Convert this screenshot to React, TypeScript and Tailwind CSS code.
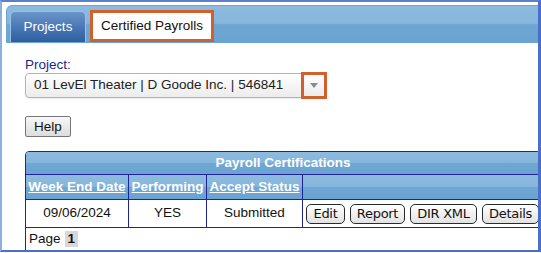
import React from 'react';

// Column definitions for the certification table
const columns = [
  { label: 'Week End Date', width: 'w-[103px]' },
  { label: 'Performing', width: 'w-[78px]' },
  { label: 'Accept Status', width: 'w-[96px]' },
];

const actions = [
  { label: 'Edit', width: 'w-[39px]' },
  { label: 'Report', width: 'w-[55px]' },
  { label: 'DIR XML', width: 'w-[67px]' },
  { label: 'Details', width: 'w-[57px]' },
];

const gloss =
  'bg-[linear-gradient(to_bottom,#8dbbdf_0%,#86b5dc_48%,#6fa7d3_52%,#6aa3d1_100%)]';

function App() {
  return (
    <div className="h-[253px] w-[541px] overflow-hidden bg-white font-['Liberation_Sans',Arial,sans-serif] text-[13.5px] text-[#111]">
      <div className="h-[252px] w-full overflow-hidden border-t-2 border-r-[3px] border-b-2 border-l-2 border-t-[#5a80cc] border-r-[#4a6fc6] border-b-[#4a6fc6] border-l-[#8eaee0] pt-[3px] pl-[4px]">
        {/* Tab bar */}
        <div
          className={`flex h-[38px] w-[540px] items-end gap-[4px] rounded-tl-[6px] border border-[#6aa6da] pl-[3px] ${gloss}`}
        >
          <div className="flex h-[31px] w-[76px] items-center justify-center rounded-t-[5px] border border-b-0 border-[#9cc0e6] bg-[linear-gradient(to_bottom,#6b95c9_0%,#4a78b6_50%,#2f5e9f_100%)] text-white">
            Projects
          </div>
          <div className="flex h-[32px] w-[124px] items-center justify-center border-[3px] border-[#d3602a] bg-white">
            Certified Payrolls
          </div>
        </div>

        {/* Content */}
        <div className="pt-[14px] pl-[19px]">
          <div className="leading-[15px] text-[#1e1e8e]">Project:</div>
          <div className="relative mt-px flex h-[25px] w-[302px] items-center rounded-[4px] border border-[#b4b4b4] bg-[linear-gradient(to_bottom,#ffffff,#ececec)] pl-[8px] text-[#222] shadow-[0_1px_1px_rgba(0,0,0,0.08)]">
            01 LevEl Theater | D Goode Inc. | 546841
            <div className="absolute -top-[2px] -right-[1px] flex h-[27px] w-[26px] items-center justify-center border-[3px] border-[#d3602a]">
              <svg width="8" height="5" viewBox="0 0 8 5">
                <path d="M0 0h8L4 5z" fill="#8a8a8a" />
              </svg>
            </div>
          </div>

          <button className="mt-[18px] h-[21px] w-[46px] rounded-[2px] border border-[#767676] bg-[linear-gradient(to_bottom,#f8f8f8,#dcdcdc)] text-[13.5px] leading-none">
            Help
          </button>

          {/* Payroll table */}
          <div className="mt-[14px] w-[516px] overflow-hidden rounded-t-[4px] border border-[#22229a]">
            <div
              className={`flex h-[22px] items-center justify-center font-bold text-white ${gloss}`}
            >
              Payroll Certifications
            </div>
            <div className={`flex h-[25px] border-t border-[#22229a] ${gloss}`}>
              {columns.map(col => (
                <div
                  key={col.label}
                  className={`${col.width} flex items-center justify-center border-r border-[#22229a] font-bold text-white underline`}
                >
                  {col.label}
                </div>
              ))}
              <div className="flex-1" />
            </div>
            <div className="flex h-[28px] border-t border-[#22229a] bg-white">
              <div className="flex w-[103px] items-center justify-center border-r border-[#22229a]">
                09/06/2024
              </div>
              <div className="flex w-[78px] items-center justify-center border-r border-[#22229a]">
                YES
              </div>
              <div className="flex w-[96px] items-center justify-center border-r border-[#22229a]">
                Submitted
              </div>
              <div className="flex flex-1 items-center gap-[5px] pl-[3px]">
                {actions.map(a => (
                  <button
                    key={a.label}
                    className={`${a.width} h-[20px] rounded-[5px] border border-[#2a2a2a] bg-[linear-gradient(to_bottom,#ffffff,#e2e2e2)] font-['DejaVu_Sans',sans-serif] text-[13px] leading-none tracking-[-0.3px]`}
                  >
                    {a.label}
                  </button>
                ))}
              </div>
            </div>
            <div className="flex h-[23px] items-center border-t border-[#22229a] pl-[3px]">
              Page
              <span className="ml-[4px] bg-[#d8d8d8] px-[3px] font-bold leading-[16px]">1</span>
            </div>
          </div>
        </div>
      </div>
    </div>
  );
}

export default App;
